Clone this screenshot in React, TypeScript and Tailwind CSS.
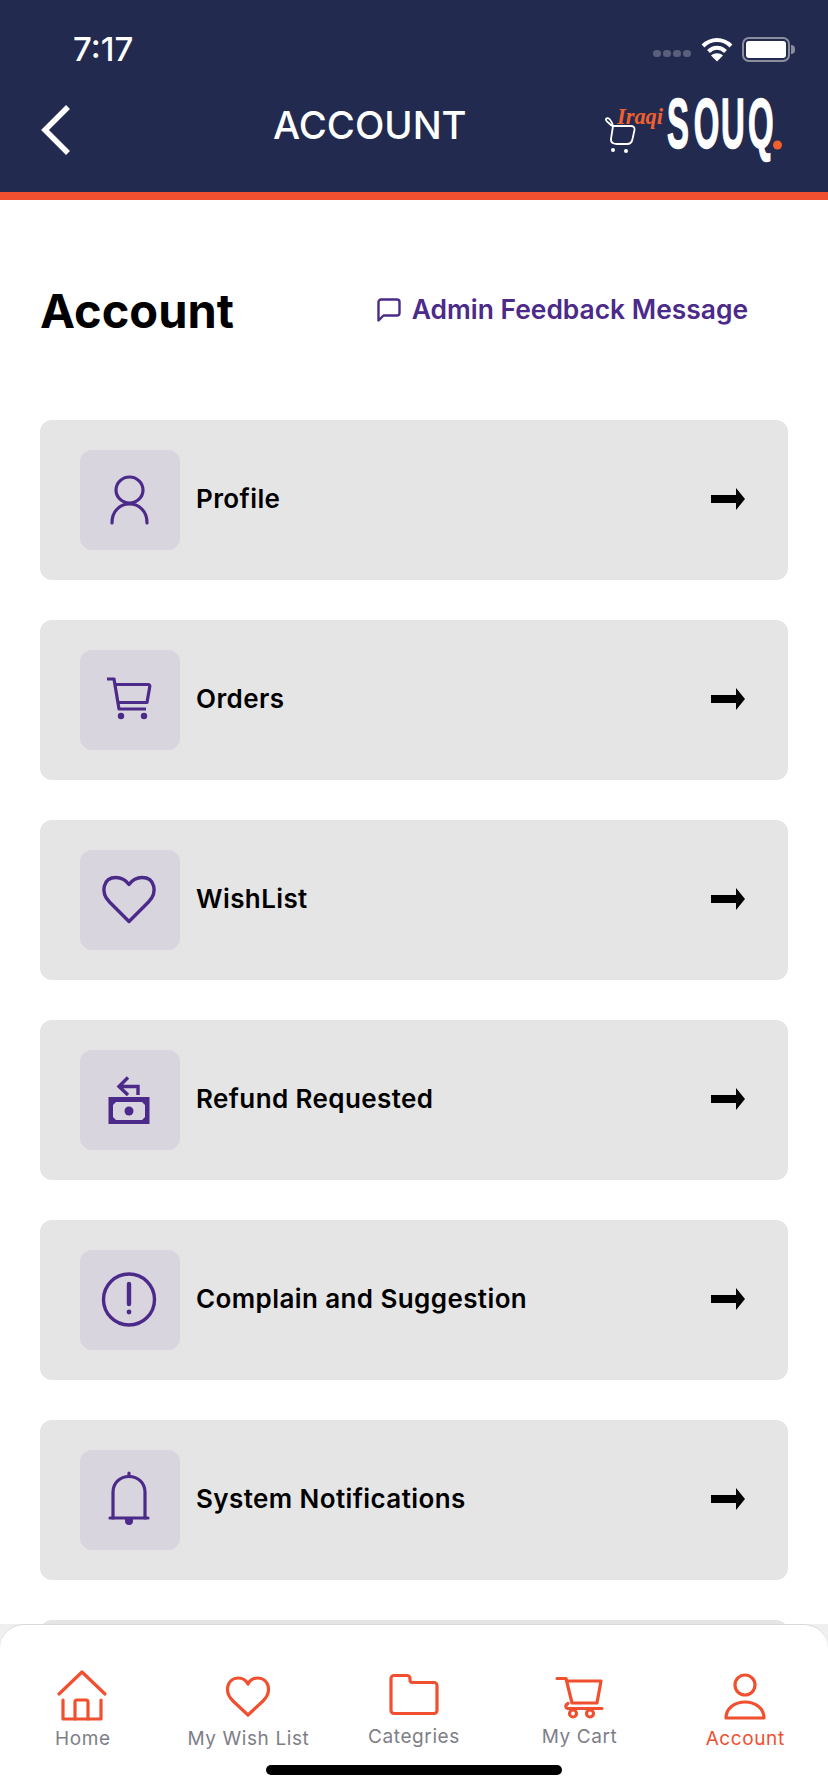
import React from 'react';

const purple = '#4b2a8a';
const orange = '#f0502f';

const ProfileIcon = () => (
  <g fill="none" stroke={purple} strokeWidth="3.2" strokeLinecap="round">
    <ellipse cx="49.5" cy="40" rx="13.5" ry="13" />
    <path d="M32 73C32 61 40 54 49.5 54C59 54 67 61 67 73" />
  </g>
);

const CartIcon = () => (
  <g fill="none" stroke={purple} strokeWidth="3.2" strokeLinejoin="round">
    <path d="M27 29H34L39 59H66" />
    <path d="M35 34.500H68C69.500 34.500 70 35.500 69.800 36.500L67 52.500H38" />
    <circle cx="41" cy="66" r="3.200" fill={purple} stroke="none" />
    <circle cx="64" cy="66" r="3.200" fill={purple} stroke="none" />
  </g>
);

const HeartIcon = () => (
  <path
    d="M49 71.500L29.500 52C20 42.500 23 27.500 36 27.500C42 27.500 46 30.500 49 34.500C52 30.500 56 27.500 62 27.500C75 27.500 78 42.500 68.500 52Z"
    fill="none"
    stroke={purple}
    strokeWidth="3.400"
    strokeLinejoin="round"
  />
);

const RefundIcon = () => (
  <g>
    <rect x="28.500" y="47" width="41" height="27" fill={purple} />
    <path d="M36 52H62L65 55V67L62 70H36L33 67V55Z" fill="#d8d5df" />
    <circle cx="49" cy="61" r="4.500" fill={purple} />
    <path d="M48 27.500L39 36.500L48 45M39 36.500H58V45" fill="none" stroke={purple} strokeWidth="3.400" />
  </g>
);

const AlertIcon = () => (
  <g fill="none" stroke={purple}>
    <circle cx="49" cy="49.500" r="25.500" strokeWidth="3.400" />
    <path d="M49 34V54" strokeWidth="4.400" strokeLinecap="round" />
    <circle cx="49" cy="62" r="2.400" fill={purple} stroke="none" />
  </g>
);

const BellIcon = () => (
  <g fill="none" stroke={purple} strokeWidth="3.200" strokeLinecap="round">
    <path d="M33 68V42C33 33 40 26.500 49 26.500C58 26.500 65 33 65 42V68" />
    <path d="M30 68H68" />
    <path d="M49 23V26" />
    <path d="M45 69H53V71A4 4 0 0 1 45 71Z" fill={purple} stroke="none" />
  </g>
);

const rows = [
  { label: 'Profile', icon: <ProfileIcon /> },
  { label: 'Orders', icon: <CartIcon /> },
  { label: 'WishList', icon: <HeartIcon /> },
  { label: 'Refund Requested', icon: <RefundIcon /> },
  { label: 'Complain and Suggestion', icon: <AlertIcon /> },
  { label: 'System Notifications', icon: <BellIcon /> },
  { label: '', icon: null },
];

const tabs = [
  {
    label: 'Home',
    icon: (
      <>
        <path d="M6 28L29 6L52 28" />
        <path d="M10 34V53H48V34" />
        <path d="M22 53V36A2 2 0 0 1 24 34H33A2 2 0 0 1 35 36V53" />
      </>
    ),
  },
  {
    label: 'My Wish List',
    icon: <path d="M30 49L15 35C5 25 10 12 20 12C25 12 28 14 30 18C32 14 35 12 40 12C50 12 55 25 45 35Z" />,
  },
  {
    label: 'Categries',
    raised: true,
    icon: (
      <path d="M10 9.500H23A3 3 0 0 1 26 12.500V14A2.500 2.500 0 0 0 28.500 16.500H50A3 3 0 0 1 53 19.500V44.500A3 3 0 0 1 50 47.500H10A3 3 0 0 1 7 44.500V12.500A3 3 0 0 1 10 9.500Z" />
    ),
  },
  {
    label: 'My Cart',
    raised: true,
    icon: (
      <>
        <path d="M7 12.500H16L22 37H47L51 15H17" />
        <path d="M52 42.500H19C15 42.500 15 39 18 37.500" />
        <circle cx="23" cy="47.500" r="3.500" />
        <circle cx="40" cy="47.500" r="3.500" />
      </>
    ),
  },
  {
    label: 'Account',
    active: true,
    icon: (
      <>
        <circle cx="30" cy="19" r="10" />
        <path d="M11 52C11 42 20 36 30 36C40 36 49 42 49 52Z" />
      </>
    ),
  },
];

const App: React.FC = () => {
  return (
    <div className="relative h-[1792px] w-[828px] overflow-hidden bg-white font-['Inter',sans-serif]">
      <header className="h-[200px] border-b-8 border-[#f0502f] bg-[#232a4f] text-white">
        <div className="flex h-[97px] items-center pt-[2px] pl-[73px] pr-[33px]">
          <span className="text-[33px] font-medium">7:17</span>
          <div className="ml-auto flex items-center">
            <div className="mr-[10px] mt-[8px] flex gap-[2px]">
              <span className="h-[7px] w-[8px] rounded-full bg-[#5a607c]" />
              <span className="h-[7px] w-[8px] rounded-full bg-[#5a607c]" />
              <span className="h-[7px] w-[8px] rounded-full bg-[#5a607c]" />
              <span className="h-[7px] w-[8px] rounded-full bg-[#5a607c]" />
            </div>
            <svg width="32" height="25" viewBox="0 0 32 25" fill="none" stroke="white" strokeWidth="4" className="mr-[9px]">
              <path d="M2 9C10 1 22 1 30 9" />
              <path d="M7.500 14.500C12.500 9.500 19.500 9.500 24.500 14.500" />
              <path d="M16 24.500L10 18.500C13.500 15.500 18.500 15.500 22 18.500Z" fill="white" stroke="none" />
            </svg>
            <div className="flex h-[25px] w-[48px] items-center justify-center rounded-[7px] border-2 border-[#8b8e9f]">
              <span className="h-[17px] w-[40px] rounded-[3px] bg-white" />
            </div>
            <span className="ml-[1px] h-[9px] w-[4px] rounded-r-full bg-[#8b8e9f]" />
          </div>
        </div>
        <div className="flex h-[57px] items-center pl-[41px] pr-[47px]">
          <svg width="30" height="50" viewBox="0 0 30 50" fill="none" stroke="white" strokeWidth="5.500" className="mt-[8px]">
            <path d="M27 2L4 25L27 48" />
          </svg>
          <h1 className="ml-[202px] text-[38.300px] font-medium leading-none">ACCOUNT</h1>
          <svg width="176" height="58" viewBox="0 0 176 58" className="ml-auto overflow-visible">
            <text x="12" y="27" textLength="46" lengthAdjust="spacingAndGlyphs" fill="#f0602f" fontSize="24" fontWeight="700" fontStyle="italic" fontFamily="'Liberation Serif',serif">Iraqi</text>
            <text
              x="132 189 247 304"
              y="51"
              transform="scale(0.47 1)"
              fill="white"
              stroke="white"
              strokeWidth="1.500"
              fontSize="70"
              fontWeight="700"
              fontFamily="'Liberation Sans',sans-serif"
            >
              SOUQ
            </text>
            <circle cx="172.500" cy="48" r="4.500" fill="#f0602f" />
            <g fill="none" stroke="white" strokeWidth="1.800" strokeLinejoin="round">
              <path d="M7 29C3 25 0 24 1 22C3 19 7 24 8 29L6 42C5.500 46 9 47 12 47H22C26 47 27 45 27.500 42L29.500 33C30 30 28 29 26 29H8" />
              <circle cx="8" cy="53" r="2" fill="white" stroke="none" />
              <circle cx="21" cy="54" r="2" fill="white" stroke="none" />
            </g>
          </svg>
        </div>
      </header>

      <main>
        <div className="flex h-[220px] items-center pl-10 pr-[80px]">
          <h2 className="text-[47px] font-bold leading-none text-black">Account</h2>
          <svg width="24" height="24" viewBox="0 0 24 24" fill="none" stroke={purple} strokeWidth="2.400" strokeLinejoin="round" className="ml-auto mr-[11px]">
            <path d="M1.500 22.500V4A2.500 2.500 0 0 1 4 1.500H20A2.500 2.500 0 0 1 22.500 4V15A2.500 2.500 0 0 1 20 17.500H6.500Z" />
          </svg>
          <span className="text-[26.400px] font-semibold text-[#4b2a8a]">Admin Feedback Message</span>
        </div>

        <ul className="flex flex-col gap-10 px-10">
          {rows.map((row, i) => (
            <li key={i} className="flex h-40 shrink-0 items-center rounded-[12px] bg-[#e5e5e5] pl-10 pr-[43px]">
              {row.icon && (
                <>
                  <div className="h-[100px] w-[100px] rounded-[12px] bg-[#d8d5df]">
                    <svg width="100" height="100" viewBox="0 0 100 100">{row.icon}</svg>
                  </div>
                  <span className="ml-4 mb-1 text-[26px] font-semibold tracking-[0.4px] text-black">{row.label}</span>
                  <svg width="34" height="22" viewBox="0 0 34 22" className="ml-auto mb-[3px]">
                    <path d="M0 7H25V0L34 11L25 22V15H0Z" fill="black" />
                  </svg>
                </>
              )}
            </li>
          ))}
        </ul>
      </main>

      <nav className="absolute inset-x-0 bottom-0 h-[168px] bg-[#f0efef]">
        <div className="grid h-full grid-cols-5 rounded-t-[24px] border-t border-[#d9d9d9] bg-white pt-[41px]">
          {tabs.map((tab) => (
            <div key={tab.label} className="flex flex-col items-center">
              <svg width="60" height="60" viewBox="0 0 60 60" fill="none" stroke={orange} strokeWidth="3.200" strokeLinecap="round" strokeLinejoin="round">
                {tab.icon}
              </svg>
              <span
                className={`whitespace-nowrap text-[19px] leading-6 tracking-[0.6px] ${tab.active ? 'text-[#f0502f]' : 'text-[#7e7e87]'} ${tab.raised ? '-mt-px' : 'mt-px'}`}
              >
                {tab.label}
              </span>
            </div>
          ))}
        </div>
      </nav>

      <div className="absolute bottom-[17px] left-[266px] h-[10px] w-[296px] rounded-full bg-black" />
    </div>
  );
};

export default App;
